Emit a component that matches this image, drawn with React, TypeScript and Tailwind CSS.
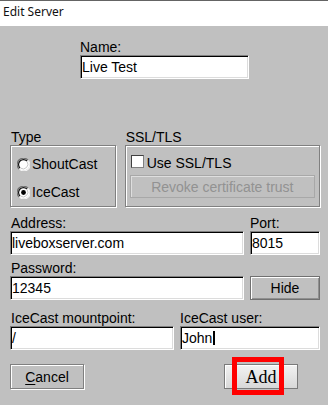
import type { ReactNode } from "react";

function Field({ value, width, caret }: { value: string; width: string; caret?: boolean }) {
  return (
    <div
      className={`${width} flex h-[24px] items-center border border-t-[#808080] border-l-[#808080] border-r-white border-b-white bg-white pl-[1px] shadow-[inset_1px_1px_0_#000,inset_-1px_-1px_0_#dcdcdc]`}
    >
      <span className="whitespace-nowrap">{value}</span>
      {caret ? <span className="ml-[1px] h-[14px] w-[2px] bg-black" /> : null}
    </div>
  );
}

function Radio({ checked }: { checked?: boolean }) {
  return (
    <svg width="13" height="13" viewBox="0 0 13 13" className="shrink-0">
      <circle cx="6.5" cy="6.5" r="6" fill="#fff" />
      <path d="M2 11 A6 6 0 0 1 11 2" fill="none" stroke="#707070" strokeWidth="1.2" />
      <path d="M3 10 A4.8 4.8 0 0 1 10 3" fill="none" stroke="#101010" strokeWidth="1.2" />
      <path d="M11.2 2.6 A6 6 0 0 1 2.6 11.2" fill="none" stroke="#f4f4f4" strokeWidth="1.2" />
      <path d="M10.2 3.6 A4.8 4.8 0 0 1 3.6 10.2" fill="none" stroke="#c8c8c8" strokeWidth="1" />
      {checked ? <circle cx="6.5" cy="6.5" r="2.4" fill="#000" /> : null}
    </svg>
  );
}

function Group({ width, label, children }: { width: string; label: string; children: ReactNode }) {
  return (
    <div className={width}>
      <div className="h-[16px] pl-[1px]">{label}</div>
      <div className="h-[62px] border border-[#808080] shadow-[inset_1px_1px_0_#fff,1px_1px_0_#fff]">{children}</div>
    </div>
  );
}

export default function App() {
  return (
    <div className="h-[405px] w-[328px] overflow-hidden bg-[#c0c0c0] font-['Liberation_Sans',Arial,sans-serif] text-[14px] leading-[16px] text-black">
      <div className="h-[26px] border-t border-[#646464] bg-white pl-[3px] pt-[3px] font-['Noto_Sans',sans-serif] text-[12px] leading-[16px] text-[#111]">
        Edit Server
      </div>

      <div className="pl-[10px] pr-[8px]">
        <div className="ml-[70px] mt-[13px]">
          <div className="h-[16px]">Name:</div>
          <Field value="Live Test" width="w-[169px]" />
        </div>

        <div className="mt-[50px] flex gap-[9px]">
          <Group width="w-[106px]" label="Type">
            <div className="flex flex-col gap-[12px] pl-[6px] pt-[10px]">
              <div className="flex items-center gap-[2px]">
                <Radio />
                <span>ShoutCast</span>
              </div>
              <div className="flex items-center gap-[2px]">
                <Radio checked />
                <span>IceCast</span>
              </div>
            </div>
          </Group>
          <Group width="w-[196px]" label="SSL/TLS">
            <div className="px-[4px] pt-[9px]">
              <div className="flex items-start gap-[3px] pl-[1px]">
                <span className="h-[13px] w-[13px] shrink-0 border border-t-[#404040] border-l-[#404040] border-r-[#808080] border-b-[#808080] bg-white" />
                <span>Use SSL/TLS</span>
              </div>
              <div className="mt-[4px] flex h-[23px] items-center justify-center border border-[#a8a8a8] text-[#929292] shadow-[inset_1px_1px_0_#dedede]">
                Revoke certificate trust
              </div>
            </div>
          </Group>
        </div>

        <div className="mt-[8px] grid grid-cols-[234px_70px] gap-x-[6px]">
          <div className="h-[16px] pl-[1px]">Address:</div>
          <div className="h-[16px]">Port:</div>
          <Field value="liveboxserver.com" width="w-[234px]" />
          <Field value="8015" width="w-[70px]" />
        </div>

        <div className="mt-[5px] grid grid-cols-[234px_70px] gap-x-[6px]">
          <div className="h-[16px] pl-[1px]">Password:</div>
          <div />
          <Field value="12345" width="w-[234px]" />
          <div className="flex h-[24px] items-center justify-center border border-[#707070] shadow-[inset_1px_1px_0_#fff,inset_-1px_-1px_0_#909090]">
            Hide
          </div>
        </div>

        <div className="mt-[10px] grid grid-cols-[164px_140px] gap-x-[6px]">
          <div className="h-[16px] pl-[1px]">IceCast mountpoint:</div>
          <div className="h-[16px]">IceCast user:</div>
          <Field value="/" width="w-[164px]" />
          <Field value="John" width="w-[140px]" caret />
        </div>

        <div className="mt-[14px] flex">
          <div className="flex h-[25px] w-[74px] items-center justify-center border border-[#808080] shadow-[inset_1px_1px_0_#fff,1px_1px_0_#fff]">
            <span>
              <span className="underline underline-offset-2">C</span>ancel
            </span>
          </div>
          <div className="relative ml-auto mr-[22px] flex h-[25px] w-[74px] items-center justify-center border border-[#7a7a7a] bg-gradient-to-b from-[#f2f2f2] to-[#d8d8d8] font-['Liberation_Serif',serif] text-[18px] shadow-[inset_1px_1px_0_#fff]">
            Add
            <div className="absolute -top-[8px] left-[7px] h-[38px] w-[52px] border-[5px] border-[#ff0000]" />
          </div>
        </div>
      </div>
    </div>
  );
}
